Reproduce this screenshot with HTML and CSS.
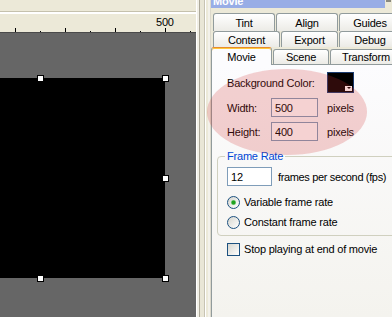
FILE: index.html
```html
<!DOCTYPE html>
<html lang="en">
<head>
    <meta charset="UTF-8">
    <title>Movie Properties</title>
    <link rel="stylesheet" href="styles.css">
</head>
<body>

    <div class="app">
        <div class="stage-side">
            <div class="topbar"></div>
            <div class="ruler">
                <svg width="196" height="18" viewBox="0 0 196 18">
                    <g stroke="#000" stroke-width="1">
                        <line x1="15.5" y1="14" x2="15.5" y2="18"/>
                        <line x1="40.5" y1="17" x2="40.5" y2="18"/>
                        <line x1="65.5" y1="14" x2="65.5" y2="18"/>
                        <line x1="90.5" y1="17" x2="90.5" y2="18"/>
                        <line x1="115.5" y1="14" x2="115.5" y2="18"/>
                        <line x1="140.5" y1="17" x2="140.5" y2="18"/>
                        <line x1="165.5" y1="14" x2="165.5" y2="18"/>
                        <line x1="190.5" y1="17" x2="190.5" y2="18"/>
                    </g>
                    <text x="156" y="12" class="ruler-label">500</text>
                </svg>
            </div>
            <div class="canvas">
                <div class="movie-rect">
                    <span class="handle h-top-mid"></span>
                    <span class="handle h-top-right"></span>
                    <span class="handle h-mid-right"></span>
                    <span class="handle h-bot-mid"></span>
                    <span class="handle h-bot-right"></span>
                </div>
            </div>
        </div>

        <div class="splitter"></div>

        <div class="panel">
            <div class="panel-head">
                <div class="panel-title"><span>Movie</span></div>
                <div class="panel-btn"></div>
            </div>

            <div class="tabs">
                <div class="tab-row row-1">
                    <div class="tab w-tint">Tint</div>
                    <div class="tab w-align">Align</div>
                    <div class="tab w-guides">Guides</div>
                </div>
                <div class="tab-row row-2">
                    <div class="tab w-content">Content</div>
                    <div class="tab w-export">Export</div>
                    <div class="tab w-debug">Debug</div>
                </div>
                <div class="tab-row row-3">
                    <div class="tab active w-movie">Movie</div>
                    <div class="tab w-scene">Scene</div>
                    <div class="tab w-transform">Transform</div>
                </div>
            </div>

            <div class="page">
                <div class="props">
                    <label class="prop-label wide">Background Color:</label>
                    <div class="swatch"><span class="swatch-arrow"></span></div>

                    <label class="prop-label" for="movieWidth">Width:</label>
                    <input class="field" type="text" id="movieWidth" value="500">
                    <span class="unit">pixels</span>

                    <label class="prop-label" for="movieHeight">Height:</label>
                    <input class="field" type="text" id="movieHeight" value="400">
                    <span class="unit">pixels</span>
                </div>

                <fieldset class="group">
                    <legend>Frame Rate</legend>
                    <div class="fps-row">
                        <input class="field fps" type="text" value="12">
                        <span class="fps-text">frames per second (fps)</span>
                    </div>
                    <label class="choice"><input type="radio" name="rate" checked> Variable frame rate</label>
                    <label class="choice"><input type="radio" name="rate"> Constant frame rate</label>
                </fieldset>

                <label class="choice check-row"><input type="checkbox"> Stop playing at end of movie</label>
            </div>

            <div class="highlight"></div>
        </div>
    </div>

</body>
</html>
```

FILE: styles.css
```css
* {
    box-sizing: border-box;
}
html, body {
    margin: 0;
    padding: 0;
}
body {
    width: 392px;
    height: 317px;
    overflow: hidden;
    background-color: #ece9d8;
    font-family: 'Liberation Sans', Arial, sans-serif;
    font-size: 11px;
    letter-spacing: -0.2px;
    color: #000;
}
.app {
    display: flex;
    height: 317px;
}

/* stage */
.stage-side {
    width: 196px;
    flex-shrink: 0;
    display: flex;
    flex-direction: column;
}
.topbar {
    height: 14px;
    background-color: #ece9d8;
    border-bottom: 2px solid #fff;
    box-shadow: inset 0 -1px #c5c1ad;
}
.ruler {
    height: 19px;
    background-color: #ece9d8;
    border-bottom: 1px solid #4a4a4a;
}
.ruler svg {
    display: block;
}
.ruler-label {
    font-family: 'Liberation Sans', Arial, sans-serif;
    font-size: 11px;
    fill: #000;
}
.canvas {
    flex: 1;
    position: relative;
    overflow: hidden;
    background-color: #666;
}
.movie-rect {
    position: absolute;
    left: -85px;
    top: 45px;
    width: 250px;
    height: 200px;
    background-color: #000;
}
.handle {
    position: absolute;
    width: 7px;
    height: 7px;
    margin: -3px 0 0 -3px;
    background-color: #fff;
    border: 1px solid #000;
}
.h-top-mid { left: 125px; top: 0; }
.h-top-right { left: 250px; top: 0; }
.h-mid-right { left: 250px; top: 100px; }
.h-bot-mid { left: 125px; top: 200px; }
.h-bot-right { left: 250px; top: 200px; }

.splitter {
    width: 15px;
    flex-shrink: 0;
    background: linear-gradient(to right,
        #fff 0 1px,
        #f1efe6 1px 3px,
        #aca899 3px 4px,
        #e9e6d6 4px 8px,
        #c7c3b3 8px 9px,
        #fff 9px 10px,
        #ece9d8 10px 12px,
        #f3f1ea 12px 14px,
        #dcd9cc 14px 15px);
}

/* panel */
.panel {
    position: relative;
    width: 200px;
    flex-shrink: 0;
    display: flex;
    flex-direction: column;
}
.panel-head {
    display: flex;
    height: 8px;
}
.panel-title {
    width: 174px;
    height: 8px;
    overflow: hidden;
    padding-left: 2px;
    background-color: #98ade6;
    color: #fff;
    font-weight: bold;
}
.panel-title span {
    display: block;
    margin-top: -5px;
    line-height: 13px;
}
.panel-btn {
    width: 5px;
    height: 2px;
    margin-left: 1px;
    background-color: #8a8a80;
}
.tabs {
    margin-top: 5px;
}
.tab-row {
    display: flex;
    gap: 1px;
    padding-left: 2px;
}
.tab {
    flex-shrink: 0;
    display: flex;
    align-items: center;
    justify-content: center;
    white-space: nowrap;
    border: 1px solid #919b9c;
    border-bottom: none;
    border-radius: 3px 3px 0 0;
    background: linear-gradient(#fff, #ecebe6);
}
.row-1 .tab { height: 18px; }
.row-2 .tab { height: 16px; }
.row-3 {
    height: 17px;
    padding-left: 0;
    align-items: flex-end;
}
.row-3 .tab { height: 15px; }
.row-3 .tab.active {
    position: relative;
    z-index: 2;
    height: 18px;
    margin-bottom: -1px;
    border-top: 1px solid #e68b2c;
    box-shadow: inset 0 1px #ffc83c;
    background: #fcfcfe;
}
.w-tint, .w-align, .w-guides, .w-debug { width: 62px; }
.w-content { width: 67px; }
.w-export { width: 57px; }
.w-movie { width: 61px; }
.w-scene { width: 56px; }
.w-transform { width: 72px; }

.page {
    flex: 1;
    padding: 7px 0 0 15px;
    border-top: 1px solid #919b9c;
    border-left: 1px solid #919b9c;
    background: linear-gradient(#fcfcfe, #f4f3ee);
}
.props {
    display: grid;
    grid-template-columns: 44px 47px auto;
    grid-template-rows: 21px 19px 19px;
    row-gap: 5px;
    align-items: center;
    white-space: nowrap;
}
.prop-label.wide {
    grid-column: span 2;
}
.swatch {
    width: 27px;
    height: 21px;
    margin-left: 9px;
    display: flex;
    align-items: flex-end;
    justify-content: flex-end;
    padding: 1px;
    border: 1px solid #1b3b6f;
    background-color: #000;
}
.swatch-arrow {
    width: 7px;
    height: 5px;
    background-color: #fff;
}
.swatch-arrow::after {
    content: '';
    display: block;
    margin: 1px auto 0;
    width: 0;
    height: 0;
    border-left: 2px solid transparent;
    border-right: 2px solid transparent;
    border-top: 2px solid #000;
}
.field {
    width: 47px;
    height: 19px;
    margin: 0;
    padding: 0 3px;
    border: 1px solid #7f9db9;
    background-color: #fff;
    font: inherit;
    letter-spacing: inherit;
    color: #000;
    outline: none;
}
.unit {
    margin-left: 9px;
}

.group {
    width: 200px;
    margin: 9px 0 0 -10px;
    padding: 5px 9px 3px;
    border: 1px solid #d0d0bf;
    border-radius: 4px;
}
.group legend {
    margin-left: -2px;
    padding: 0 2px;
    color: #0046d5;
}
.fps-row {
    display: flex;
    align-items: center;
    white-space: nowrap;
}
.field.fps {
    width: 45px;
}
.fps-text {
    margin-left: 6px;
    letter-spacing: -0.35px;
}
.choice {
    display: flex;
    align-items: center;
    gap: 4px;
    height: 20px;
    white-space: nowrap;
}
.fps-row + .choice {
    margin-top: 6px;
}
.choice input {
    appearance: none;
    -webkit-appearance: none;
    width: 13px;
    height: 13px;
    margin: 0;
    flex-shrink: 0;
    border: 1px solid #1c5180;
}
.choice input[type="radio"] {
    border-radius: 50%;
    background: linear-gradient(135deg, #d6d6cf, #fff);
}
.choice input[type="radio"]:checked {
    background:
        radial-gradient(circle, #21a121 0 1.6px, #7ccc7c 2.2px, transparent 3px),
        linear-gradient(135deg, #d6d6cf, #fff);
}
.choice input[type="checkbox"] {
    background: linear-gradient(135deg, #d6d6cf, #fff);
}
.check-row {
    margin-top: 3px;
}

.highlight {
    position: absolute;
    left: -4px;
    top: 69px;
    width: 160px;
    height: 86px;
    border-radius: 50%;
    background-color: rgba(210, 50, 50, 0.22);
    pointer-events: none;
}
```
